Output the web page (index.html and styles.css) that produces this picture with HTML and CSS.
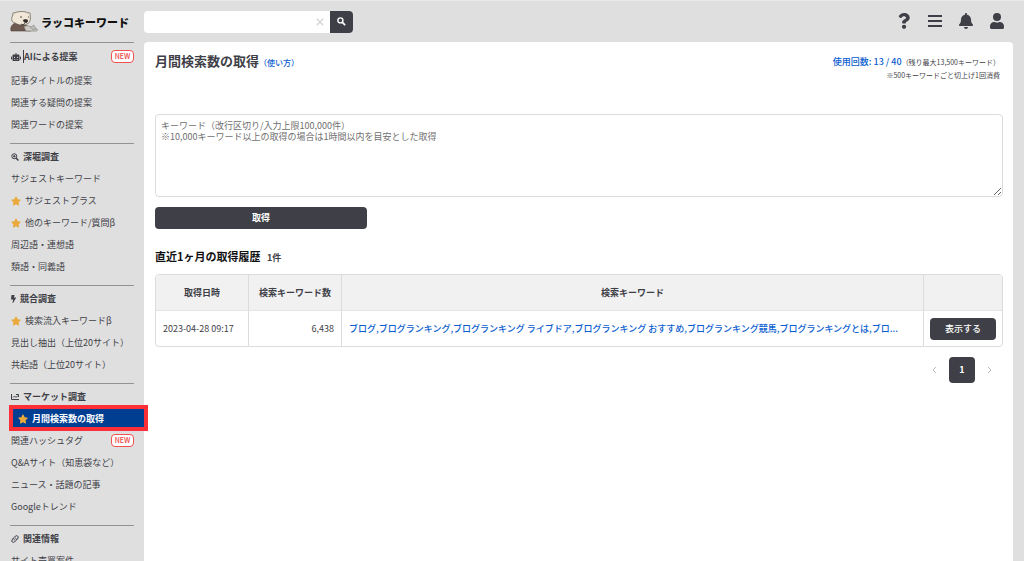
FILE: index.html
```html
<!DOCTYPE html>
<html lang="ja">
<head>
<meta charset="utf-8">
<meta name="viewport" content="width=device-width, initial-scale=1">
<title>ラッコキーワード</title>
<link rel="stylesheet" href="styles.css">
</head>
<body>
<svg class="symbols" aria-hidden="true">
  <symbol id="star" viewBox="0 0 576 512"><path d="M259 18 194 150 48 171c-26 4-37 36-18 55l106 103-25 145c-5 26 23 46 46 34l131-68 131 68c23 12 51-8 46-34l-25-145 106-103c19-19 8-51-18-55l-146-21L317 18c-12-24-46-24-58 0z"/></symbol>
</svg>
<div class="shell">
  <aside class="sidebar">
    <a class="logo" href="#">
      <svg class="otter" viewBox="0 0 28 21" aria-hidden="true">
        <path d="M1 20C0 16 2 13 6 12l9 2c4 1 5 3 6 6z" fill="#6f5a51" stroke="#4d3f3a" stroke-width=".6"/>
        <path d="M3 4C2 2 4 1 5 2c3-2 10-2 13 0 2-1 3 1 2 2 1 4 0 8-3 9-4 2-9 1-12-1C1 11 1 7 3 4z" fill="#f0e7d8" stroke="#5d5148" stroke-width=".7"/>
        <path d="M13 9c1-1 4-1 5 0 0 2-1 3-2 3s-3-1-3-3z" fill="#302c2c"/>
        <path d="M10 6h2M18 6h1M15 12c-1 2-3 2-4 1" fill="none" stroke="#302c2c" stroke-width=".8"/>
        <path d="M14 16c2-2 5-1 7 0l6 2c1 1 0 2-1 2H16z" fill="#cfcbc4" stroke="#77736f" stroke-width=".6"/>
        <path d="M20 16l4-2 2 4-3 1z" fill="#b9b9b7" stroke="#8a8886" stroke-width=".5"/>
      </svg>
      <span>ラッコキーワード</span>
    </a>
    <nav>
      <section class="group group-ai">
        <h2><svg class="ico ico-robot" viewBox="0 0 640 512" aria-hidden="true"><path fill-rule="evenodd" d="M0 256v128c0 18 14 32 32 32h32V224H32c-18 0-32 14-32 32zm464-160H352V32c0-42-64-42-64 0v64H176c-44 0-80 36-80 80v272c0 35 29 64 64 64h320c35 0 64-29 64-64V176c0-44-36-80-80-80zM256 416h-64v-32h64zm-32-104a40 40 0 1 1 0-80 40 40 0 0 1 0 80zm128 104h-64v-32h64zm96 0h-64v-32h64zm-32-104a40 40 0 1 1 0-80 40 40 0 0 1 0 80zm224-56v128c0 18-14 32-32 32h-32V224h32c18 0 32 14 32 32z"/></svg><span class="caret"></span>AIによる提案<span class="new">NEW</span></h2>
        <a href="#">記事タイトルの提案</a>
        <a href="#">関連する疑問の提案</a>
        <a href="#">関連ワードの提案</a>
      </section>
      <section class="group">
        <h2><svg class="ico" viewBox="0 0 16 16" aria-hidden="true"><g fill="none" stroke="currentColor" stroke-width="2"><circle cx="6.500" cy="6.500" r="5"/><path d="M10 10l5 5" stroke-width="3"/><path d="M4 6.500h5M6.500 4v5"/></g></svg>深堀調査</h2>
        <a href="#">サジェストキーワード</a>
        <a href="#"><svg class="star"><use href="#star"/></svg>サジェストプラス</a>
        <a href="#"><svg class="star"><use href="#star"/></svg>他のキーワード/質問β</a>
        <a href="#">周辺語・連想語</a>
        <a href="#">類語・同義語</a>
      </section>
      <section class="group">
        <h2><svg class="ico ico-bolt" viewBox="0 0 320 512" aria-hidden="true"><path d="M296 160H181l42-129C227 15 216 0 200 0H56C44 0 34 9 32 21L0 261c-2 14 9 27 24 27h119L97 483c-4 16 8 29 23 29 8 0 16-4 21-12l176-304c9-16-2-36-21-36z"/></svg>競合調査</h2>
        <a href="#"><svg class="star"><use href="#star"/></svg>検索流入キーワードβ</a>
        <a href="#">見出し抽出（上位20サイト）</a>
        <a href="#">共起語（上位20サイト）</a>
      </section>
      <section class="group">
        <h2><svg class="ico" viewBox="0 0 16 16" aria-hidden="true"><path d="M1 2v11h15M4 9l3-3 3 3 4-4M10 3h5v5" fill="none" stroke="currentColor" stroke-width="2"/></svg>マーケット調査</h2>
        <a class="active" href="#" aria-current="page"><svg class="star"><use href="#star"/></svg>月間検索数の取得</a>
        <a href="#">関連ハッシュタグ<span class="new">NEW</span></a>
        <a href="#">Q&amp;Aサイト（知恵袋など）</a>
        <a href="#">ニュース・話題の記事</a>
        <a href="#">Googleトレンド</a>
      </section>
      <section class="group">
        <h2><svg class="ico" viewBox="0 0 16 16" aria-hidden="true"><g fill="none" stroke="currentColor" stroke-width="2" stroke-linecap="round"><path d="M7 10C4 8 5 6 7 4l2-2c3-2 7 1 5 4l-2 3"/><path d="M9 6c3 2 2 4 0 6l-2 2c-3 2-7-1-5-4l2-3"/></g></svg>関連情報</h2>
        <a href="#">サイト売買案件</a>
      </section>
    </nav>
  </aside>
  <div class="content">
    <header class="topbar">
      <form class="search">
        <input type="text" aria-label="キーワード検索">
        <button class="clear" type="reset" aria-label="クリア"><svg viewBox="0 0 10 10"><path d="M1 1l8 8M9 1L1 9" stroke="currentColor" stroke-width="2"/></svg></button>
        <button class="submit" type="button" aria-label="検索"><svg viewBox="0 0 16 16"><circle cx="6" cy="6" r="4.500" fill="none" stroke="currentColor" stroke-width="2.500"/><path d="M9.500 9.500l5 5" stroke="currentColor" stroke-width="3"/></svg></button>
      </form>
      <div class="tools">
        <button type="button" aria-label="ヘルプ"><svg viewBox="0 0 384 512"><path d="M202 0C122 0 70 33 29 91c-8 11-5 25 5 33l43 32c11 8 26 7 34-4 25-31 43-49 80-49 30 0 66 19 66 48 0 22-18 33-47 49-34 19-79 43-79 103v9c0 14 11 25 25 25h72c14 0 25-11 25-25v-6c0-42 122-43 122-156C375 66 287 0 202 0zm-9 374a69 69 0 1 0 0 138 69 69 0 0 0 0-138z"/></svg></button>
        <button type="button" aria-label="メニュー"><svg viewBox="0 0 16 16"><path d="M1 3h14M1 8h14M1 13h14" stroke="currentColor" stroke-width="2"/></svg></button>
        <button type="button" aria-label="通知"><svg viewBox="0 0 448 512"><path d="M224 512c35 0 64-29 64-64H160c0 35 29 64 64 64zm215-150c-19-20-55-52-55-154 0-78-54-140-128-155V32c0-42-64-42-64 0v21C118 68 64 130 64 208c0 102-36 134-55 154-6 7-9 14-9 22 0 16 13 32 32 32h384c19 0 32-16 32-32 0-8-3-15-9-22z"/></svg></button>
        <button type="button" aria-label="アカウント"><svg viewBox="0 0 448 512"><path d="M224 256a128 128 0 1 0 0-256 128 128 0 0 0 0 256zm90 32h-17a174 174 0 0 1-146 0h-17C60 288 0 348 0 422v42c0 26 22 48 48 48h352c26 0 48-22 48-48v-42c0-74-60-134-134-134z"/></svg></button>
      </div>
    </header>
    <main class="card">
      <div class="heading">
        <div class="title"><h1>月間検索数の取得</h1><a href="#">（使い方）</a></div>
        <div class="usage">
          <p><b>使用回数: 13 / 40</b>（残り最大13,500キーワード）</p>
          <p>※500キーワードごと切上げ1回消費</p>
        </div>
      </div>
      <form>
        <textarea class="keywords" aria-label="キーワード" placeholder="キーワード（改行区切り/入力上限100,000件）&#10;※10,000キーワード以上の取得の場合は1時間以内を目安とした取得"></textarea>
        <button class="btn fetch" type="button">取得</button>
      </form>
      <h2 class="history-title">直近1ヶ月の取得履歴 <small>1件</small></h2>
      <table class="history">
        <colgroup><col class="col-date"><col class="col-count"><col><col class="col-action"></colgroup>
        <thead><tr><th>取得日時</th><th>検索キーワード数</th><th>検索キーワード</th><th></th></tr></thead>
        <tbody><tr>
          <td>2023-04-28 09:17</td>
          <td class="num">6,438</td>
          <td><a href="#">ブログ,ブログランキング,ブログランキング ライブドア,ブログランキング おすすめ,ブログランキング競馬,ブログランキングとは,ブロ...</a></td>
          <td class="action"><button class="btn" type="button">表示する</button></td>
        </tr></tbody>
      </table>
      <nav class="pager" aria-label="ページ">
        <button type="button" disabled aria-label="前へ"><svg viewBox="0 0 6 8"><path d="M5 1L2 4l3 3" fill="none" stroke="currentColor"/></svg></button>
        <button class="current" type="button">1</button>
        <button type="button" disabled aria-label="次へ"><svg viewBox="0 0 6 8"><path d="M1 1l3 3-3 3" fill="none" stroke="currentColor"/></svg></button>
      </nav>
    </main>
  </div>
</div>
</body>
</html>
```
FILE: styles.css
```css
* { box-sizing: border-box; }
body {
  margin: 0;
  height: 100vh;
  overflow: hidden;
  background: #dfdfdf;
  color: #3f3f48;
  font: 9px/14px "Noto Sans CJK JP", sans-serif;
}
h1, h2, p { margin: 0; }
a { color: #0b5ed0; text-decoration: none; }
button, input, textarea { font: inherit; color: inherit; }
button { border: 0; padding: 0; background: none; cursor: pointer; }
svg { fill: currentColor; display: block; flex: none; }
.symbols { position: absolute; width: 0; height: 0; }

.shell {
  display: grid;
  grid-template-columns: 144px 1fr;
  min-height: 100vh;
  border-top: 1px solid #e8e8e8;
}

/* Sidebar */
.sidebar { padding: 0 10px; position: relative; z-index: 1; }
.logo {
  display: flex;
  align-items: center;
  gap: 3px;
  height: 41px;
  color: #111;
  font-size: 11px;
  font-weight: 900;
  white-space: nowrap;
}
.otter { width: 28px; height: 21px; }
.group {
  border-top: 1px solid #939393;
  padding-top: 1px;
  margin-bottom: 8px;
}
.group h2, .group a {
  display: flex;
  align-items: center;
  height: 22px;
  padding-top: 1px;
  padding-left: 1px;
  font-size: 9px;
  white-space: nowrap;
  color: inherit;
}
.group h2 { font-weight: 700; }
.group-ai h2 { height: 24px; margin-bottom: 1px; }
.ico { width: 8px; height: 8px; margin-right: 4px; }
.ico-robot { width: 10px; margin-right: 2px; }
.ico-bolt { width: 5px; }
.caret { width: 1px; height: 13px; background: #3f3f48; }
.star { width: 10px; height: 10px; margin-right: 4px; color: #e9a93c; }
.new {
  margin-left: auto;
  width: 23px;
  height: 13px;
  border: 1px solid #ef5350;
  border-radius: 4px;
  background: #fff;
  color: #ef4444;
  font-size: 7px;
  line-height: 11px;
  font-weight: 500;
  text-align: center;
}
.group .active {
  height: 18px;
  margin: 2px -10px 2px 3px;
  padding-left: 5px;
  background: #003e92;
  outline: 4px solid #fb2f35;
  color: #fff;
  font-weight: 700;
}

/* Top bar */
.content { display: flex; flex-direction: column; min-width: 0; padding-right: 11px; }
.topbar { display: flex; justify-content: space-between; align-items: center; height: 41px; }
.search {
  display: flex;
  width: 209px;
  height: 22px;
  border-radius: 4px;
  overflow: hidden;
  background: #fff;
}
.search input { flex: 1; min-width: 0; border: 0; padding: 0 8px; background: none; outline: 0; }
.clear { width: 20px; color: #d8d8d8; }
.clear svg { width: 8px; height: 8px; margin: auto; }
.submit { width: 23px; background: #3f3f48; color: #fff; }
.submit svg { width: 9px; height: 9px; margin: auto; }
.tools { display: flex; gap: 15px; padding: 0 8px 2px 0; }
.tools svg { width: 16px; height: 16px; }

/* Card */
.card { flex: 1; background: #fff; border-radius: 4px 4px 0 0; padding: 10px 10px 10px 11px; }
.heading { display: flex; justify-content: space-between; height: 62px; }
.title { display: flex; align-items: baseline; }
h1 { font-size: 13px; line-height: 18px; }
.title a { font-size: 8px; font-weight: 500; }
.usage { text-align: right; font-size: 7px; padding: 3px 3px 0 0; }
.usage p { line-height: 13px; }
.usage b { color: #0b5ed0; font-size: 9px; font-weight: 500; }
.keywords {
  display: block;
  width: 100%;
  height: 83px;
  padding: 5px;
  border: 1px solid #dcdcdc;
  border-radius: 4px;
  background: #fff;
  line-height: 11px;
  outline: 0;
}
.keywords::placeholder { color: #707070; }
.btn { height: 22px; border-radius: 4px; background: #3f3f48; color: #fff; font-weight: 500; }
.fetch { display: block; width: 25%; margin-top: 10px; font-weight: 700; }
.history-title { margin: 19px 0 8px; font-size: 11px; line-height: 17px; color: #111; }
.history-title small { font-size: 9px; margin-left: 4px; color: #3f3f48; }

.history {
  width: 100%;
  table-layout: fixed;
  border-collapse: separate;
  border-spacing: 0;
  border: 1px solid #dcdcdc;
  border-radius: 4px;
  overflow: hidden;
}
.col-date { width: 92px; }
.col-count { width: 93px; }
.col-action { width: 79px; }
.history th, .history td { height: 36px; padding: 0 7px; white-space: nowrap; }
.history th + th, .history td + td { border-left: 1px solid #dcdcdc; }
.history th { background: #f1f1f1; border-bottom: 1px solid #e4e4e4; }
.history td { height: 35px; }
.history td a { font-weight: 500; }
.history .num { text-align: right; }
.history .action { padding: 0 6px; }
.action .btn { display: block; width: 100%; }

.pager { display: flex; justify-content: flex-end; align-items: center; gap: 12px; margin-top: 10px; padding-right: 10px; }
.pager svg { width: 6px; height: 8px; color: #bbb; }
.current { width: 26px; height: 26px; border-radius: 4px; background: #3f3f48; color: #fff; font-weight: 700; }
```
